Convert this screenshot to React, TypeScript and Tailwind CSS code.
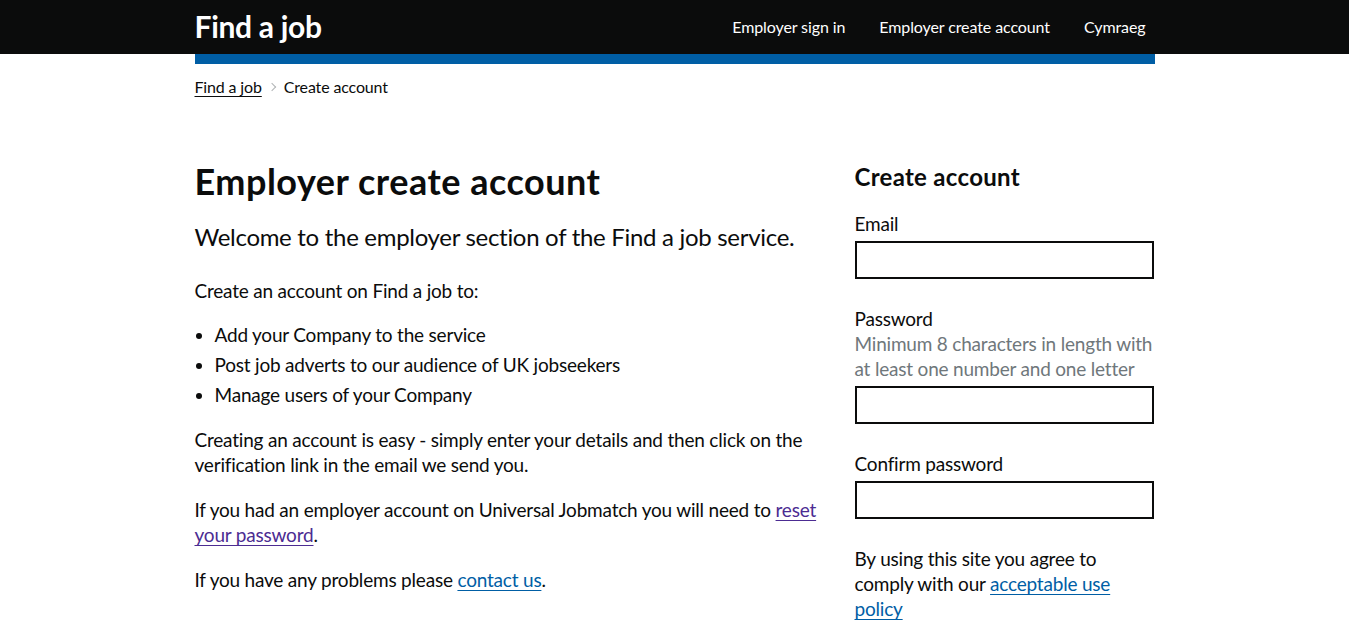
const font = "font-['Lato',_'Liberation_Sans',_sans-serif]";

function Header() {
  return (
    <header className="bg-[#0b0c0c]">
      <div className="w-[960px] mx-auto h-[54px] flex items-center justify-between">
        <a href="#" className="text-white text-[30px] font-bold leading-none tracking-[-0.3px] pb-[2px]">
          Find a job
        </a>
        <nav className="flex items-center gap-[34px] pr-[9px] text-white text-[16px] tracking-[-0.1px]">
          <a href="#">Employer sign in</a>
          <a href="#">Employer create account</a>
          <a href="#">Cymraeg</a>
        </nav>
      </div>
    </header>
  );
}

function Field({ label, hint }: { label: string; hint?: string }) {
  return (
    <div className="mb-[27px]">
      <label className="block text-[19px] leading-[25px]">{label}</label>
      {hint && <p className="text-[19px] leading-[25px] text-[#6f777b]">{hint}</p>}
      <input
        type="text"
        className="mt-[5px] block w-[299px] h-[38px] border-2 border-[#0b0c0c] bg-white outline-none px-[5px]"
      />
    </div>
  );
}

export default function App() {
  const link = "text-[#005ea5] underline underline-offset-[3px] decoration-1";
  return (
    <div className={`${font} text-[#0b0c0c] bg-white min-h-[632px]`}>
      <Header />
      <div className="w-[960px] mx-auto h-[10px] bg-[#005ea5]" />

      <div className="w-[960px] mx-auto">
        <div className="mt-[13px] flex items-center text-[16px] leading-[20px] tracking-[-0.15px]">
          <a href="#" className="underline underline-offset-[3px] decoration-1">
            Find a job
          </a>
          <span className="ml-[7px] mr-[9px] inline-block w-[6px] h-[6px] border-t border-r border-[#b1b4b6] rotate-45" />
          <span>Create account</span>
        </div>

        <main className="mt-[64px] flex gap-[30px] tracking-[-0.2px]">
          <div className="w-[630px]">
            <h1 className="text-[36px] leading-[40px] font-bold tracking-[0.5px]">Employer create account</h1>
            <p className="mt-[21px] text-[24px] leading-[30px] tracking-[-0.3px]">
              Welcome to the employer section of the Find a job service.
            </p>
            <p className="mt-[26px] text-[19px] leading-[25px]">Create an account on Find a job to:</p>
            <ul className="mt-[19px] text-[19px] leading-[25px] list-disc pl-[20px] flex flex-col gap-[5px]">
              <li>Add your Company to the service</li>
              <li>Post job adverts to our audience of UK jobseekers</li>
              <li>Manage users of your Company</li>
            </ul>
            <p className="mt-[20px] text-[19px] leading-[25px]">
              Creating an account is easy - simply enter your details and then click on the verification link in the
              email we send you.
            </p>
            <p className="mt-[20px] text-[19px] leading-[25px]">
              If you had an employer account on Universal Jobmatch you will need to{" "}
              <a href="#" className="text-[#4c2c92] underline underline-offset-[3px] decoration-1">
                reset your password
              </a>
              .
            </p>
            <p className="mt-[20px] text-[19px] leading-[25px]">
              If you have any problems please{" "}
              <a href="#" className={link}>
                contact us
              </a>
              .
            </p>
          </div>

          <div className="w-[300px] pt-[1px]">
            <h2 className="text-[24px] leading-[30px] font-bold tracking-[0.3px]">Create account</h2>
            <div className="mt-[19px]">
              <Field label="Email" />
              <Field label="Password" hint="Minimum 8 characters in length with at least one number and one letter" />
              <Field label="Confirm password" />
            </div>
            <p className="text-[19px] leading-[25px]">
              By using this site you agree to comply with our{" "}
              <a href="#" className={link}>
                acceptable use policy
              </a>
            </p>
          </div>
        </main>
      </div>
    </div>
  );
}
